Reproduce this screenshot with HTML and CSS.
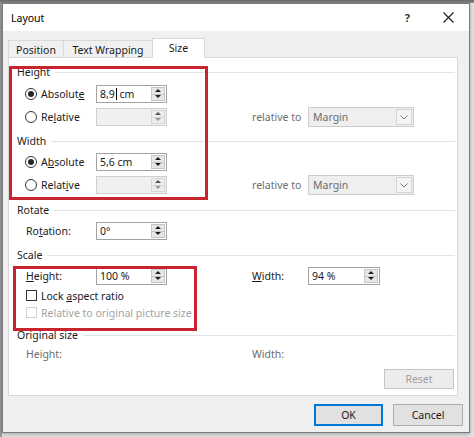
FILE: index.html
```html
<!DOCTYPE html>
<html lang="en">
<head>
<meta charset="utf-8">
<title>Layout</title>
<link rel="stylesheet" href="styles.css">
</head>
<body>
<div class="window">
  <div class="titlebar">
    <span class="title">Layout</span>
    <span class="help">?</span>
    <span class="close"><svg width="11" height="11" viewBox="0 0 11 11"><path d="M0.5 0.5L10.5 10.5M10.5 0.5L0.5 10.5" stroke="#1a1a1a" stroke-width="1.1" fill="none"/></svg></span>
  </div>
  <div class="client">
    <div class="tabs">
      <div class="tab t-pos">Position</div>
      <div class="tab t-wrap">Text Wrapping</div>
      <div class="tab t-size active">Size</div>
    </div>
    <div class="panel">
      <div class="group g1">Height</div>
      <div class="row r-a">
        <div class="opt"><span class="radio on"></span><span>Absolut<u>e</u></span></div>
        <div class="spin"><span class="val">8,9<span class="caret"></span>&nbsp;cm</span><span class="arrows"><span class="up"></span><span class="down"></span></span></div>
      </div>
      <div class="row r-b tall">
        <div class="opt"><span class="radio"></span><span>Re<u>l</u>ative</span></div>
        <div class="spin off"><span class="val"></span><span class="arrows"><span class="up"></span><span class="down"></span></span></div>
        <div class="rel">relative to</div>
        <div class="dd"><span class="txt">Margin</span><span class="ddbtn"><svg width="8" height="5" viewBox="0 0 8 5"><path d="M0.5 0.5L4 4L7.5 0.5" stroke="#777" stroke-width="1" fill="none"/></svg></span></div>
      </div>

      <div class="group g2">Width</div>
      <div class="row r-c">
        <div class="opt"><span class="radio on"></span><span>A<u>b</u>solute</span></div>
        <div class="spin"><span class="val">5,6 cm</span><span class="arrows"><span class="up"></span><span class="down"></span></span></div>
      </div>
      <div class="row r-b tall">
        <div class="opt"><span class="radio"></span><span>Relat<u>i</u>ve</span></div>
        <div class="spin off"><span class="val"></span><span class="arrows"><span class="up"></span><span class="down"></span></span></div>
        <div class="rel">relative to</div>
        <div class="dd"><span class="txt">Margin</span><span class="ddbtn"><svg width="8" height="5" viewBox="0 0 8 5"><path d="M0.5 0.5L4 4L7.5 0.5" stroke="#777" stroke-width="1" fill="none"/></svg></span></div>
      </div>

      <div class="group g3">Rotate</div>
      <div class="row r-c">
        <div class="lbl"><span>Ro<u>t</u>ation:</span></div>
        <div class="spin"><span class="val">0°</span><span class="arrows"><span class="up"></span><span class="down"></span></span></div>
      </div>

      <div class="group g3">Scale</div>
      <div class="row r-c">
        <div class="lbl"><span><u>H</u>eight:</span></div>
        <div class="spin"><span class="val">100 %</span><span class="arrows"><span class="up"></span><span class="down"></span></span></div>
        <div class="rel dark"><u>W</u>idth:</div>
        <div class="spin wide"><span class="val">94 %</span><span class="arrows"><span class="up"></span><span class="down"></span></span></div>
      </div>
      <div class="row chkrow c1">
        <div class="chkopt"><span class="chk"></span><span>Lock <u>a</u>spect ratio</span></div>
      </div>
      <div class="row chkrow c2">
        <div class="chkopt dis"><span class="chk"></span><span>Relative to original picture size</span></div>
      </div>

      <div class="group g3">Original size</div>
      <div class="row r-o">
        <div class="lbl grey"><span>Height:</span></div>
        <div class="rel wide-gap">Width:</div>
      </div>
      <div class="reset-wrap"><div class="reset">Reset</div></div>

      <div class="mark mark-a"></div>
      <div class="mark mark-b"></div>
    </div>
    <div class="footer">
      <button class="btn default">OK</button>
      <button class="btn cancel">Cancel</button>
    </div>
  </div>
</div>
</body>
</html>
```

FILE: styles.css
```css
* { box-sizing: border-box; }
html, body { margin: 0; padding: 0; }
body {
  width: 474px;
  height: 437px;
  overflow: hidden;
  font-family: "Noto Sans", "Open Sans", sans-serif;
  font-size: 10.5px;
  color: #1a1a1a;
  padding: 3px 0 0 2px;
  background:
    linear-gradient(#6a6a6a, #8c8c8c) top left / 100% 3px no-repeat,
    linear-gradient(#9a9a9a, #9a9a9a) top left / 2px 100% no-repeat,
    #e4e4e4;
}
u { text-decoration: underline; text-underline-offset: 1px; }

.window {
  width: 468px;
  height: 430px;
  border: 1px solid #7b7b7b;
  background: #f0f0f0;
  display: flex;
  flex-direction: column;
  box-shadow: 0 1px 4px rgba(0, 0, 0, 0.3);
}

.titlebar {
  flex: none;
  height: 27px;
  background: #fff;
  display: flex;
  align-items: center;
  padding-left: 8px;
}
.title { flex: 1; color: #000; font-size: 10.5px; }
.help {
  font-size: 11px;
  font-weight: bold;
  color: #333;
  margin-right: 33px;
}
.close { display: flex; margin-right: 15px; }

.client { flex: 1; display: flex; flex-direction: column; }

.tabs {
  display: flex;
  align-items: flex-end;
  height: 19px;
  margin: 7px 0 0 5px;
}
.tab {
  height: 17px;
  border: 1px solid #d9d9d9;
  border-bottom: none;
  background: #f0f0f0;
  display: flex;
  align-items: center;
  justify-content: center;
  color: #1a1a1a;
  padding-top: 1px;
}
.t-pos { width: 56px; }
.t-wrap { width: 90px; margin-left: -1px; }
.t-size { width: 53px; margin-left: -1px; }
.tab.active {
  height: 20px;
  margin-bottom: -1px;
  background: #fff;
  position: relative;
  z-index: 1;
  padding-top: 0;
  padding-bottom: 2px;
}

.panel {
  position: relative;
  width: 450px;
  height: 339px;
  margin-left: 5px;
  background: #fff;
  border: 1px solid #d9d9d9;
  display: flex;
  flex-direction: column;
}

.group {
  display: flex;
  align-items: center;
  height: 16px;
  padding-left: 8px;
  margin-right: 2px;
  color: #1a1a1a;
}
.group::after {
  content: "";
  flex: 1;
  height: 1px;
  background: #e2e2e2;
  margin-left: 5px;
}
.g1 { margin-top: 6px; }
.g2 { margin-top: 6px; }
.g3 { margin-top: 7px; }

.row { display: flex; align-items: center; height: 18px; flex: none; }
.row.tall { height: 20px; }
.r-a { margin-top: 5px; }
.r-b { margin-top: 4px; }
.r-c { margin-top: 4px; }
.chkrow { height: 15px; }
.c1 { margin-top: 3px; }
.c2 { margin-top: 2px; }
.r-o { margin-top: 3px; height: 16px; }

.opt, .lbl {
  width: 87px;
  padding-left: 16px;
  display: flex;
  align-items: center;
  white-space: nowrap;
}
.lbl { padding-left: 17px; }
.lbl.grey { color: #6d6d6d; }

.radio {
  width: 12px;
  height: 12px;
  border: 1px solid #333;
  border-radius: 50%;
  margin-right: 4px;
  position: relative;
  background: #fff;
  flex: none;
}
.radio.on::after {
  content: "";
  position: absolute;
  left: 2px;
  top: 2px;
  width: 6px;
  height: 6px;
  border-radius: 50%;
  background: #262626;
}

.spin {
  width: 71px;
  height: 18px;
  border: 1px solid #a3a3a3;
  background: #fff;
  display: flex;
  flex: none;
}
.spin.wide { width: 72px; }
.spin .val {
  flex: 1;
  padding-left: 3px;
  line-height: 16px;
  white-space: nowrap;
  display: flex;
  align-items: center;
}
.caret {
  display: inline-block;
  width: 1px;
  height: 12px;
  background: #000;
  margin-left: 1px;
}
.arrows {
  width: 15px;
  display: flex;
  flex-direction: column;
  padding: 1px 1px 1px 0;
}
.arrows span {
  flex: 1;
  background: #e7e7e7;
  border: 1px solid #c6c6c6;
  position: relative;
}
.arrows .down { border-top: none; }
.arrows span::after {
  content: "";
  position: absolute;
  left: 50%;
  top: 50%;
  margin-left: -3px;
  margin-top: -2px;
  border-left: 3px solid transparent;
  border-right: 3px solid transparent;
}
.arrows .up::after { border-bottom: 3px solid #1e1e1e; }
.arrows .down::after { border-top: 3px solid #1e1e1e; }
.spin.off { background: #f0f0f0; border-color: #cfcfcf; }
.spin.off .arrows span { background: #ededed; border-color: #d6d6d6; }
.spin.off .arrows .up::after { border-bottom-color: #555; }
.spin.off .arrows .down::after { border-top-color: #9a9a9a; }

.rel {
  width: 56px;
  margin-left: 85px;
  color: #6d6d6d;
  white-space: nowrap;
}
.rel.dark { color: #1a1a1a; }
.rel.wide-gap { margin-left: 156px; }

.dd {
  width: 106px;
  height: 20px;
  border: 1px solid #cccccc;
  background: #efefef;
  display: flex;
  color: #6d6d6d;
  flex: none;
}
.dd .txt { flex: 1; padding-left: 4px; line-height: 18px; }
.ddbtn {
  width: 16px;
  margin: 1px;
  border: 1px solid #d4d4d4;
  background: #f4f4f4;
  display: flex;
  align-items: center;
  justify-content: center;
}

.chkopt {
  padding-left: 17px;
  display: flex;
  align-items: center;
  white-space: nowrap;
}
.chk {
  width: 11px;
  height: 11px;
  border: 1px solid #333;
  background: #fff;
  margin-right: 4px;
  flex: none;
}
.chkopt.dis { color: #a3a3a3; }
.chkopt.dis .chk { border-color: #d2d2d2; }

.reset-wrap {
  display: flex;
  justify-content: flex-end;
  margin-top: 7px;
  padding-right: 3px;
}
.reset {
  width: 70px;
  height: 20px;
  border: 1px solid #c6c6c6;
  background: #ececec;
  color: #a0a0a0;
  display: flex;
  align-items: center;
  justify-content: center;
}

.mark {
  position: absolute;
  border: 3px solid #c8232f;
  pointer-events: none;
}
.mark-a { left: 0; top: 8px; width: 199px; height: 134px; }
.mark-b { left: 4px; top: 208px; width: 184px; height: 65px; }

.footer {
  display: flex;
  justify-content: flex-end;
  gap: 10px;
  margin-top: 8px;
  padding-right: 6px;
}
.btn {
  height: 22px;
  background: #e1e1e1;
  border: 1px solid #adadad;
  font-family: inherit;
  font-size: 10.5px;
  color: #1a1a1a;
  padding: 0;
}
.btn.default { width: 69px; border: 2px solid #0078d7; }
.btn.cancel { width: 70px; }
```
